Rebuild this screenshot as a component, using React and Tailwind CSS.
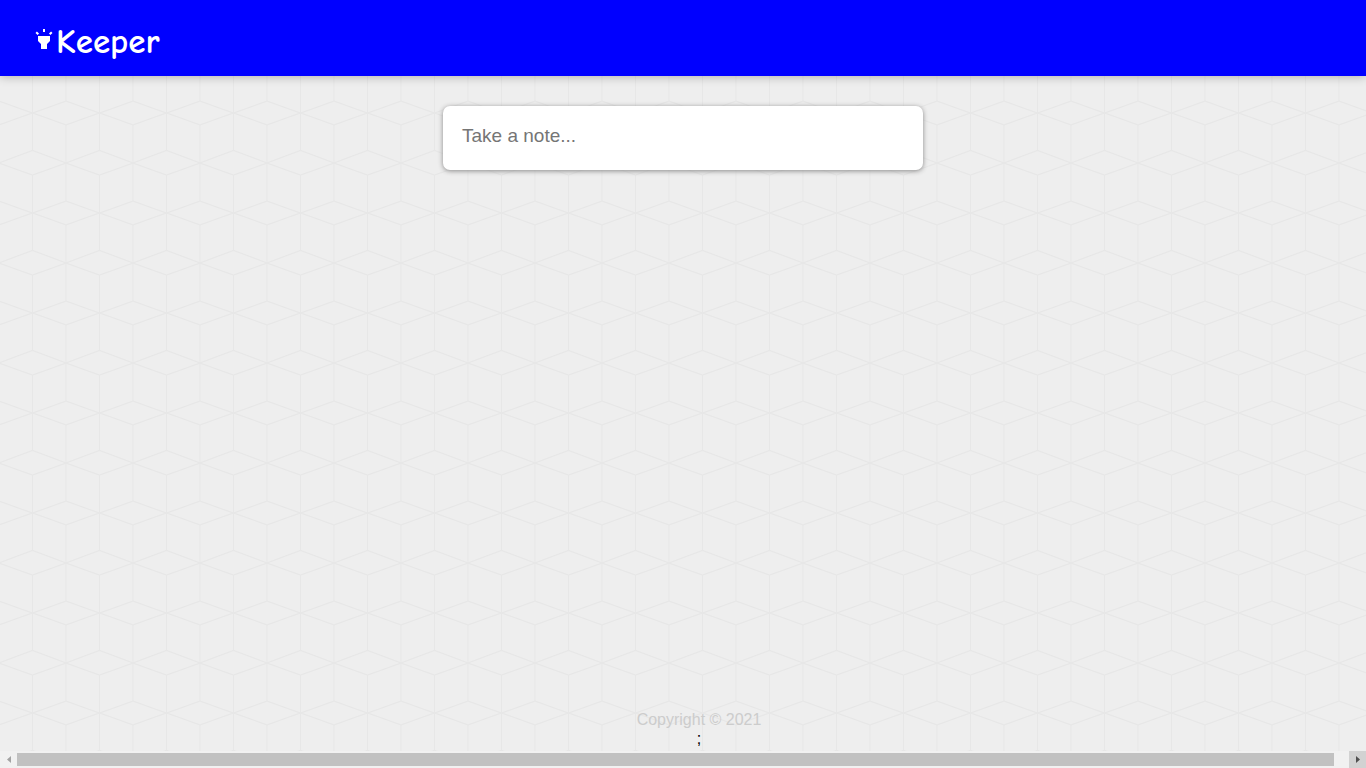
import { useState } from 'react';

function Background() {
  return (
    <svg className="absolute inset-0 -z-10 h-full w-full" aria-hidden="true">
      <defs>
        <pattern id="cubes" width="67" height="100" patternUnits="userSpaceOnUse" x="-1" y="0">
          <g fill="none" stroke="#e7e7e7" strokeWidth="1">
            <path d="M33.5 0V50.5M33.5 75V100M67 0V1M67 25V100M0 0V1M0 25V100" />
            <path strokeWidth="1.3" d="M0 1L33.5 13L67 1M0 25L33.5 13L67 25M0 63L33.5 50.5L67 63L33.5 75Z" />
          </g>
        </pattern>
      </defs>
      <rect width="100%" height="100%" fill="url(#cubes)" />
    </svg>
  );
}

function Header() {
  return (
    <header className="bg-[#0000ff] px-8 pt-[15px] pb-[13px] shadow-[0_0_10px_rgba(0,0,0,0.3)]">
      <h1 className="flex h-12 items-center text-white">
        <svg className="h-6 w-6" viewBox="0 0 24 24" fill="currentColor" aria-hidden="true">
          <path d="M6 14l3 3v5h6v-5l3-3V9H6v5zM11 2h2v3h-2V2zM3.5 5.875L4.914 4.46l2.12 2.122L5.62 7.997 3.5 5.875zM16.96 6.585l2.123-2.12 1.414 1.414L18.375 8l-1.414-1.415z" />
        </svg>
        <span className="pt-1 font-['Comic_Neue','Comic_Sans_MS',Lato,sans-serif] text-[35px] leading-none font-bold">Keeper</span>
      </h1>
    </header>
  );
}

function CreateArea() {
  const [note, setNote] = useState('');

  return (
    <form className="mx-auto mt-[30px] w-full max-w-[480px] rounded-[7px] bg-white p-[15px] shadow-[0_1px_5px_rgb(138,137,137)]">
      <textarea
        name="content"
        aria-label="Take a note"
        placeholder="Take a note..."
        rows={1}
        value={note}
        onChange={(e) => setNote(e.target.value)}
        className="block h-[34px] w-full resize-none overflow-hidden px-1 py-[3px] text-[19px] leading-6 text-black outline-none placeholder:text-[#757575]"
      />
    </form>
  );
}

function Footer() {
  const year = 2021;

  return (
    <footer className="mt-auto pb-[3px] pl-8 text-center text-base leading-[19px]">
      <p className="text-[#cccccc]">Copyright © {year}</p>
      <p className="text-black">;</p>
    </footer>
  );
}

function ScrollBar() {
  return (
    <div className="flex h-[17px] shrink-0 items-stretch bg-[#f1f1f1]">
      <button type="button" aria-label="Scroll left" className="flex w-[17px] items-center justify-center">
        <svg className="h-[7px] w-1" viewBox="0 0 4 7" fill="#a3a3a3"><path d="M4 0v7L0 3.5z" /></svg>
      </button>
      <div className="flex-1 py-[2px] pr-[15px]">
        <div className="h-full bg-[#c1c1c1]" />
      </div>
      <button type="button" aria-label="Scroll right" className="flex w-[17px] items-center justify-center bg-[#d2d2d2]">
        <svg className="h-[7px] w-1" viewBox="0 0 4 7" fill="#505050"><path d="M0 0v7l4-3.5z" /></svg>
      </button>
    </div>
  );
}

export default function App() {
  return (
    <div className="relative isolate flex min-h-screen flex-col bg-[#eeeeee] font-['Liberation_Sans',Arial,sans-serif]">
      <Background />
      <Header />
      <CreateArea />
      <Footer />
      <ScrollBar />
    </div>
  );
}
